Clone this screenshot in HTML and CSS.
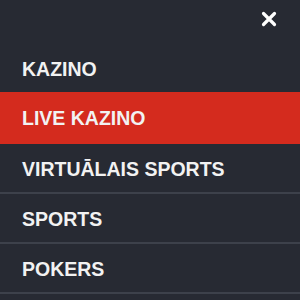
FILE: index.html
```html
<!DOCTYPE html>
<html>
	<head>
		<meta charset="utf-8">
		<link rel="stylesheet" href="styles.css">
	</head>
	<body>
		<div class="menu">
			<div class="menu-head">
				<button class="close-btn" aria-label="Close">
					<svg width="16" height="16" viewBox="0 0 16 16">
						<path d="M2.5 2.5 L13.5 13.5 M13.5 2.5 L2.5 13.5" stroke="#ffffff" stroke-width="3.2" stroke-linecap="round"/>
					</svg>
				</button>
			</div>
			<ul class="menu-list">
				<li class="menu-item">KAZINO</li>
				<li class="menu-item active">LIVE KAZINO</li>
				<li class="menu-item">VIRTUĀLAIS SPORTS</li>
				<li class="menu-item">SPORTS</li>
				<li class="menu-item">POKERS</li>
			</ul>
		</div>
	</body>
</html>
```

FILE: styles.css
```css
html, body {
	margin:0;
	padding:0;
	background:#272a33;
}
.menu {
	width:300px;
	height:300px;
	overflow:hidden;
	font-family:"Liberation Sans", Arial, sans-serif;
}
.menu-head {
	height:44px;
	display:flex;
	justify-content:flex-end;
	align-items:center;
	padding-right:23px;
	box-sizing:border-box;
}
.close-btn {
	background:none;
	border:none;
	padding:0;
	margin-top:-6px;
	width:16px;
	height:16px;
	display:flex;
}
.menu-list {
	list-style:none;
	margin:0;
	padding:0;
}
.menu-item {
	height:48px;
	display:flex;
	align-items:center;
	padding-left:22px;
	padding-top:2px;
	box-sizing:border-box;
	height:50px;
	border-bottom:2px solid #3d414b;
	color:#f2f2f2;
	font-size:19.5px;
	font-weight:bold;
}
.menu-item.active {
	background:#d42b1e;
	border-bottom-color:#d42b1e;
	margin-top:-2px;
	height:52px;
}
```
